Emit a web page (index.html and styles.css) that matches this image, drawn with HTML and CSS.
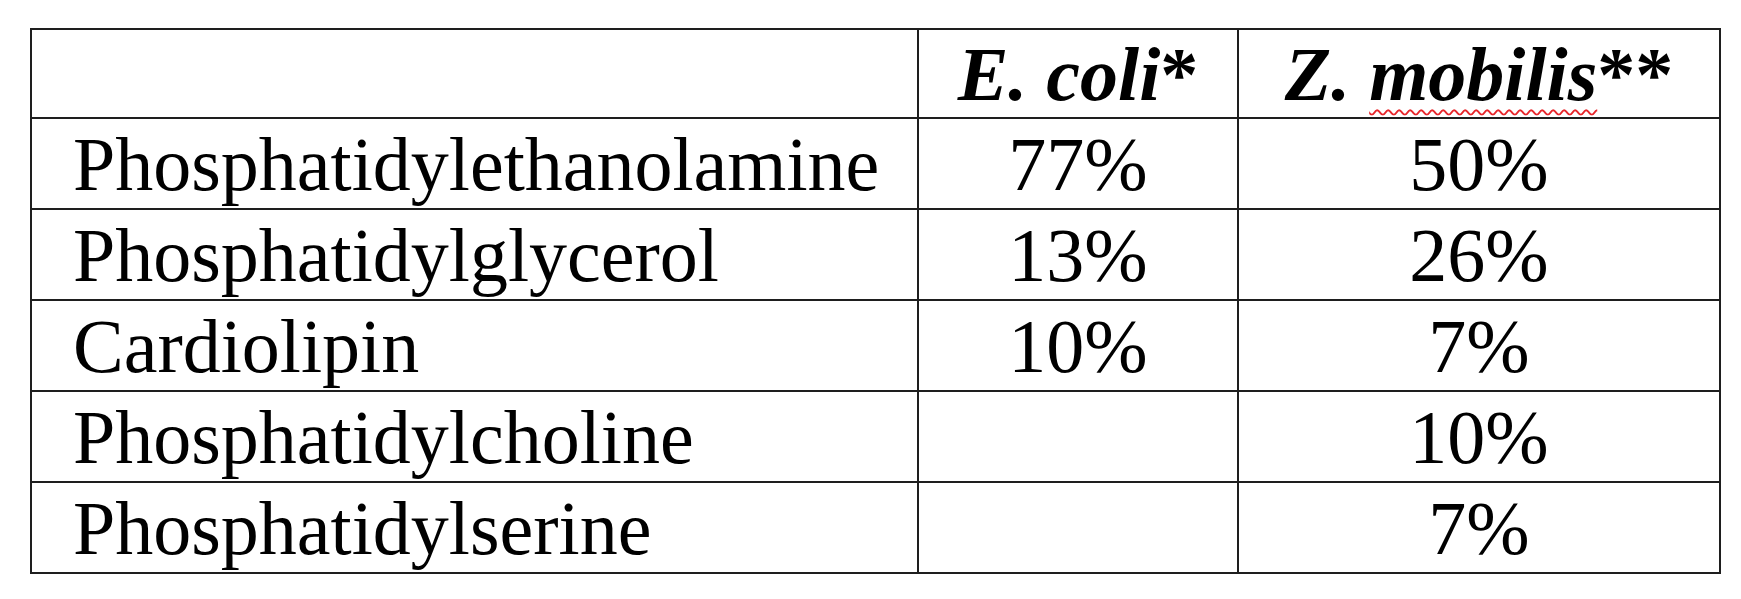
FILE: index.html
```html
<!DOCTYPE html>
<html lang="en">
<head>
    <meta charset="UTF-8">
    <meta name="viewport" content="width=device-width, initial-scale=1.0">
    <title>Phospholipid composition</title>
    <link rel="stylesheet" href="styles.css">
</head>
<body>
    <table class="lipids">
        <colgroup>
            <col class="col-name">
            <col class="col-ecoli">
            <col class="col-zmob">
        </colgroup>
        <thead>
            <tr class="head-row">
                <th></th>
                <th><i>E. coli</i>*</th>
                <th><i>Z. <span class="spell">mobilis</span></i>**</th>
            </tr>
        </thead>
        <tbody>
            <tr>
                <td class="name">Phosphatidylethanolamine</td>
                <td>77%</td>
                <td>50%</td>
            </tr>
            <tr>
                <td class="name">Phosphatidylglycerol</td>
                <td>13%</td>
                <td>26%</td>
            </tr>
            <tr>
                <td class="name">Cardiolipin</td>
                <td>10%</td>
                <td>7%</td>
            </tr>
            <tr>
                <td class="name">Phosphatidylcholine</td>
                <td></td>
                <td>10%</td>
            </tr>
            <tr>
                <td class="name">Phosphatidylserine</td>
                <td></td>
                <td>7%</td>
            </tr>
        </tbody>
    </table>
</body>
</html>
```

FILE: styles.css
```css
body {
    margin: 0;
    padding: 28px 0 0 30px;
    background: #fff;
    font-family: 'Liberation Serif', 'Times New Roman', serif;
    color: #000;
}

.lipids {
    border-collapse: collapse;
    table-layout: fixed;
    width: 1689px;
    font-size: 76px;
}

.col-name {
    width: 887px;
}

.col-ecoli {
    width: 320px;
}

.col-zmob {
    width: 482px;
}

.lipids th,
.lipids td {
    border: 2px solid #1e1e1e;
    padding: 0;
    text-align: center;
    line-height: 84px;
    vertical-align: middle;
    white-space: nowrap;
}

.lipids th {
    font-weight: bold;
}

.head-row {
    height: 89px;
}

.lipids tbody tr {
    height: 91px;
}

.lipids td.name {
    text-align: left;
    padding-left: 41px;
}

.spell {
    text-decoration: underline wavy #e8262b;
    text-decoration-thickness: 2px;
    text-underline-offset: 9px;
}
```
